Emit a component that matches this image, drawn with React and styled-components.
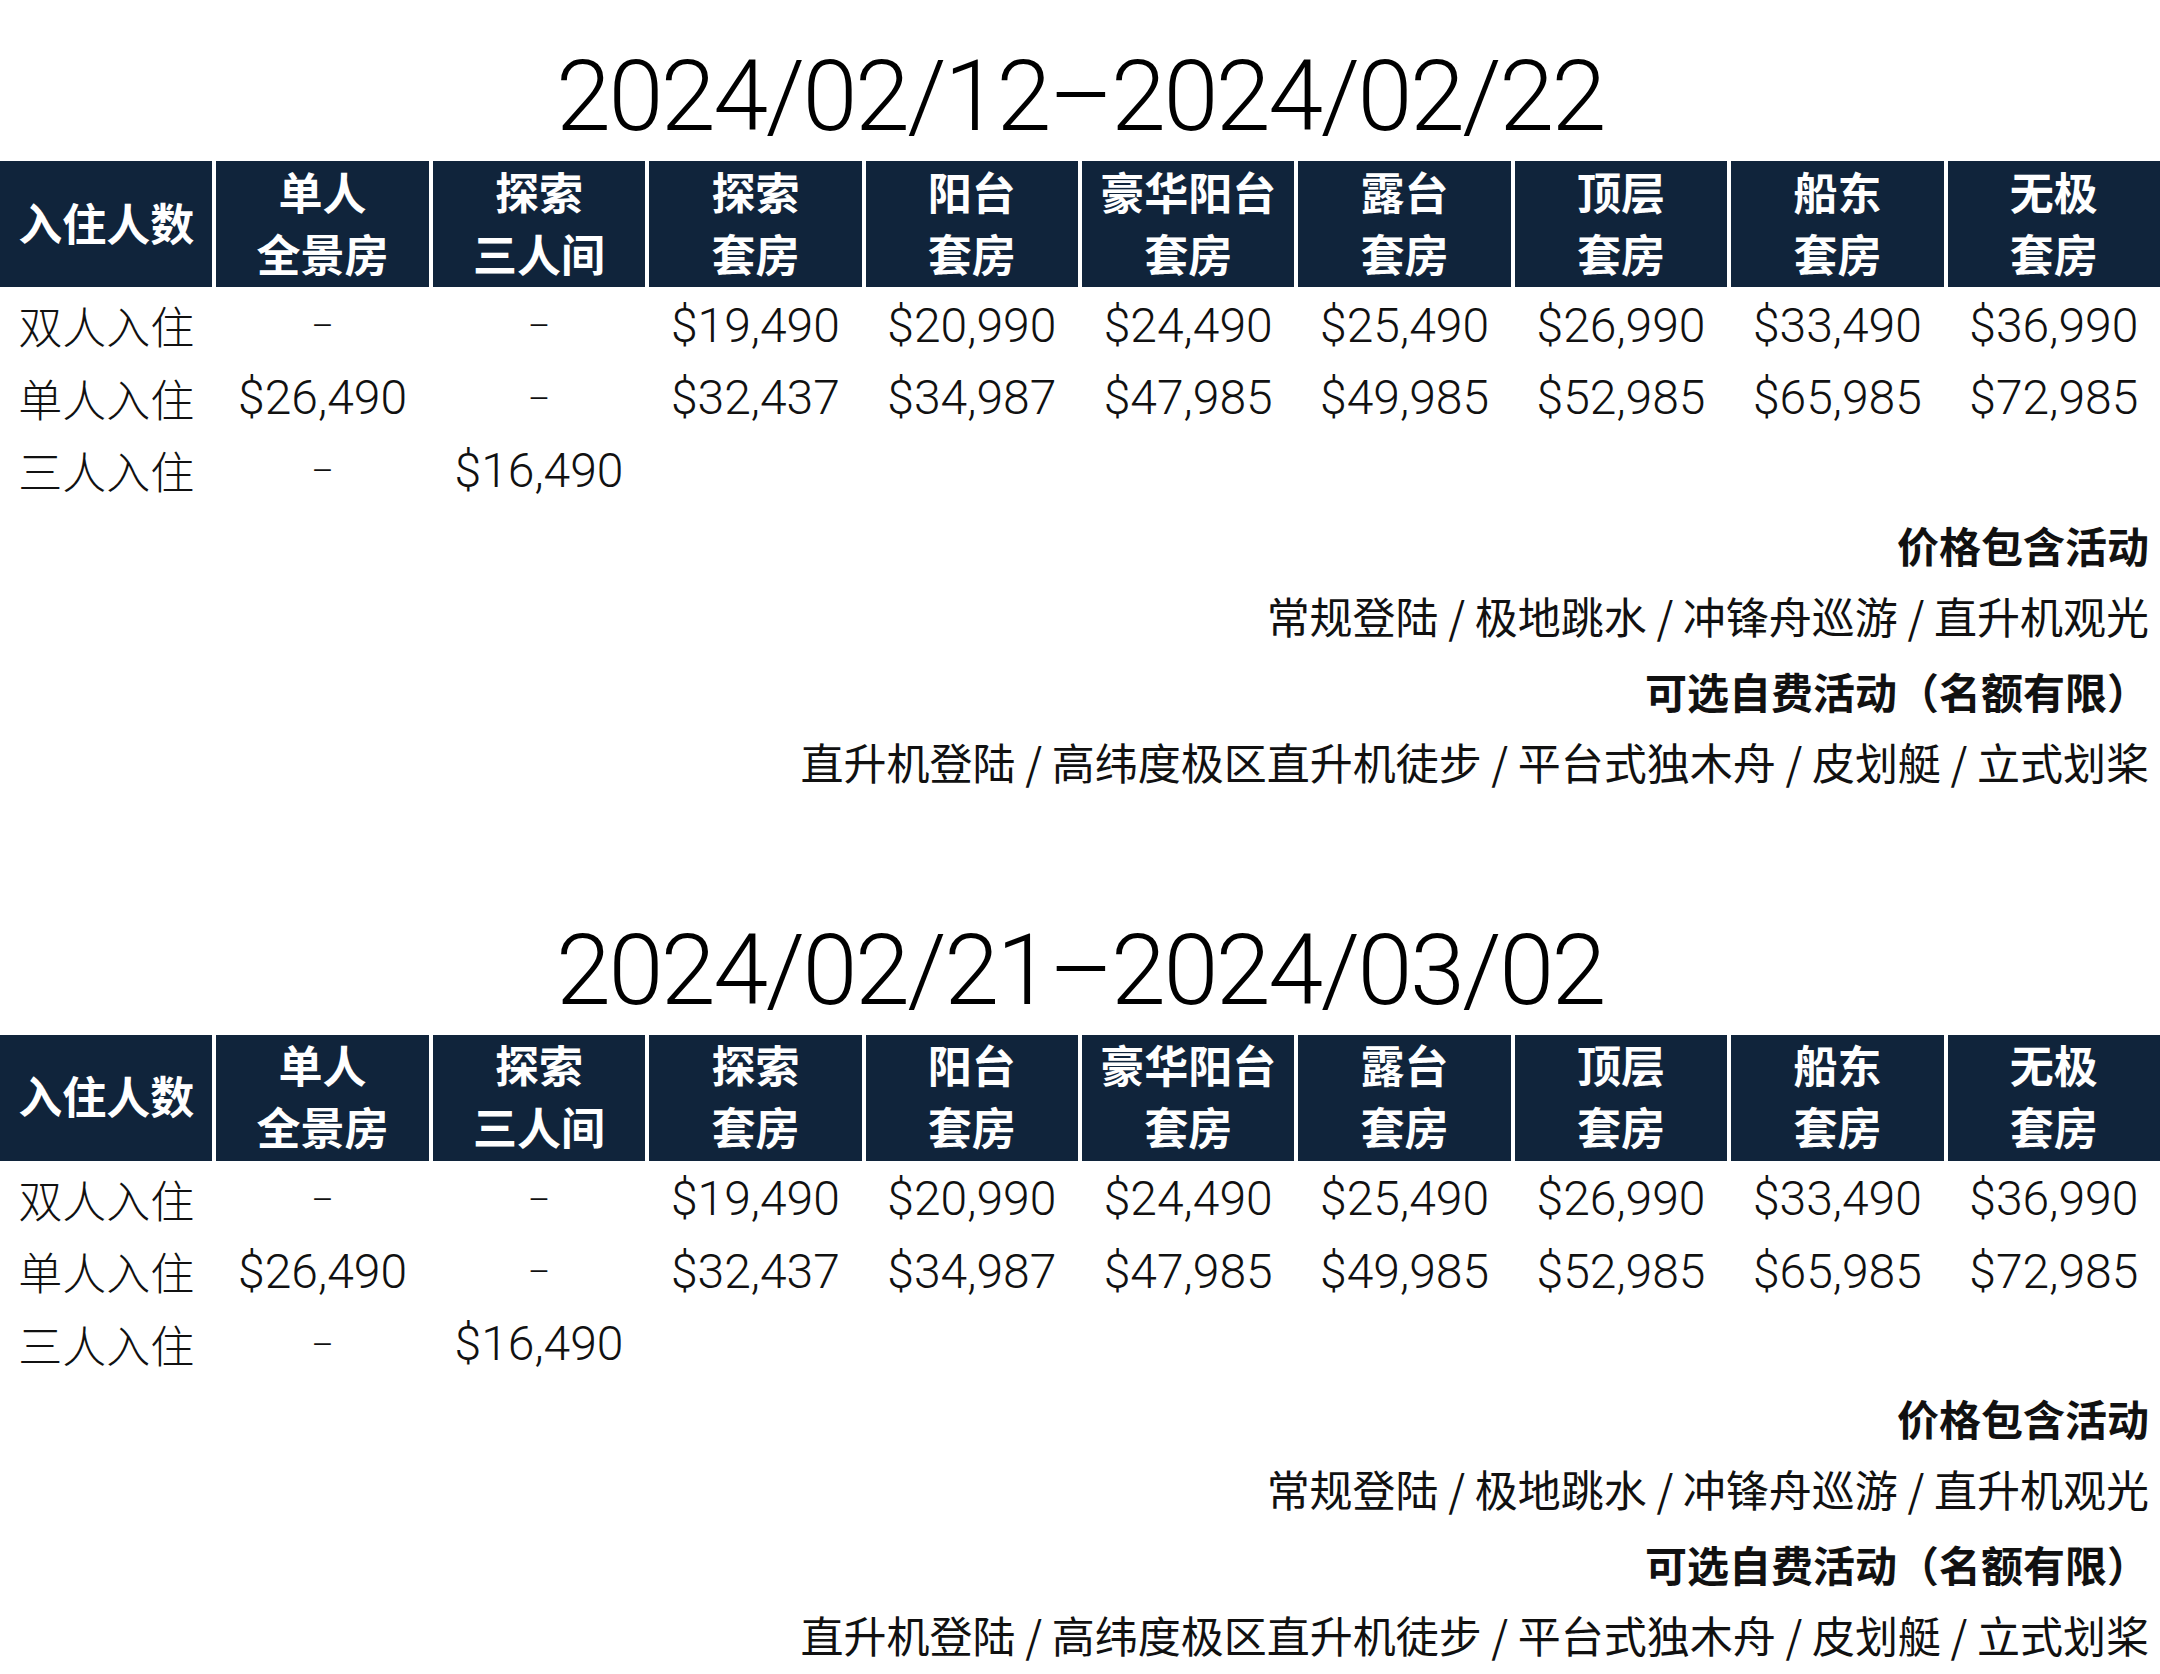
import React from 'react';
import styled, { createGlobalStyle } from 'styled-components';

const GlobalStyle = createGlobalStyle`
  html, body {
    margin: 0;
    padding: 0;
    background: #fff;
  }
  body {
    font-family: Roboto, 'Noto Sans CJK SC', sans-serif;
    color: #111;
  }
`;

const Page = styled.div`
  width: 2160px;
  padding-top: 36px;
`;

const Section = styled.section`
  margin-bottom: 113px;

  &:last-child {
    margin-bottom: 0;
  }
`;

const Title = styled.h1`
  margin: 0 0 5px;
  height: 120px;
  line-height: 120px;
  text-align: center;
  font-family: Roboto, sans-serif;
  font-weight: 300;
  font-size: 99px;
  letter-spacing: -2.5px;
  color: #000;
`;

const Grid = styled.div`
  display: grid;
  grid-template-columns: repeat(10, 1fr);
  column-gap: 4px;
`;

const HeadCell = styled.div`
  height: 126px;
  box-sizing: border-box;
  padding-bottom: 5px;
  background: #10243b;
  color: #fff;
  display: flex;
  flex-direction: column;
  align-items: center;
  justify-content: center;
  font-family: 'Noto Sans CJK SC', sans-serif;
  font-weight: 700;
  font-size: 44px;
  line-height: 62px;
  white-space: nowrap;
`;

const Body = styled(Grid)`
  margin-top: 2px;
`;

const Cell = styled.div`
  height: 72.5px;
  display: flex;
  align-items: center;
  justify-content: center;
  white-space: nowrap;
  font-family: ${(p) =>
    p.$label ? "'Noto Sans CJK SC', sans-serif" : 'Roboto, sans-serif'};
  font-weight: 300;
  font-size: ${(p) => (p.$label ? '44px' : '48px')};
  color: #111;
`;

const Dash = styled.span`
  font-family: Roboto, sans-serif;
  font-weight: 300;
  font-size: 34px;
`;

const Notes = styled.div`
  display: flex;
  flex-direction: column;
  align-items: flex-end;
  padding: 2px 11px 0 0;
`;

const NoteLine = styled.div`
  height: 71px;
  line-height: 71px;
  white-space: nowrap;
  font-family: 'Noto Sans CJK SC', sans-serif;
  font-size: ${(p) => (p.$bold ? '42px' : '43px')};
  font-weight: ${(p) => (p.$bold ? 700 : 400)};
  color: #111;
  margin-top: ${(p) => (p.$gap ? '4px' : '0')};
`;

const headers = [
  ['入住人数'],
  ['单人', '全景房'],
  ['探索', '三人间'],
  ['探索', '套房'],
  ['阳台', '套房'],
  ['豪华阳台', '套房'],
  ['露台', '套房'],
  ['顶层', '套房'],
  ['船东', '套房'],
  ['无极', '套房'],
];

const rows = [
  ['双人入住', '-', '-', '$19,490', '$20,990', '$24,490', '$25,490', '$26,990', '$33,490', '$36,990'],
  ['单人入住', '$26,490', '-', '$32,437', '$34,987', '$47,985', '$49,985', '$52,985', '$65,985', '$72,985'],
  ['三人入住', '-', '$16,490', '', '', '', '', '', '', ''],
];

const sections = ['2024/02/12–2024/02/22', '2024/02/21–2024/03/02'];

const PriceTable = ({ title }) => (
  <Section>
    <Title>{title}</Title>
    <Grid>
      {headers.map((lines, i) => (
        <HeadCell key={i}>
          {lines.map((l) => (
            <span key={l}>{l}</span>
          ))}
        </HeadCell>
      ))}
    </Grid>
    <Body>
      {rows.map((row) =>
        row.map((v, i) => (
          <Cell key={row[0] + i} $label={i === 0}>
            {v === '-' ? <Dash>–</Dash> : v}
          </Cell>
        ))
      )}
    </Body>
    <Notes>
      <NoteLine $bold>价格包含活动</NoteLine>
      <NoteLine>常规登陆 / 极地跳水 / 冲锋舟巡游 / 直升机观光</NoteLine>
      <NoteLine $bold $gap>可选自费活动（名额有限）</NoteLine>
      <NoteLine>直升机登陆 / 高纬度极区直升机徒步 / 平台式独木舟 / 皮划艇 / 立式划桨</NoteLine>
    </Notes>
  </Section>
);

const App = () => (
  <Page>
    <GlobalStyle />
    {sections.map((t) => (
      <PriceTable key={t} title={t} />
    ))}
  </Page>
);

export default App;
